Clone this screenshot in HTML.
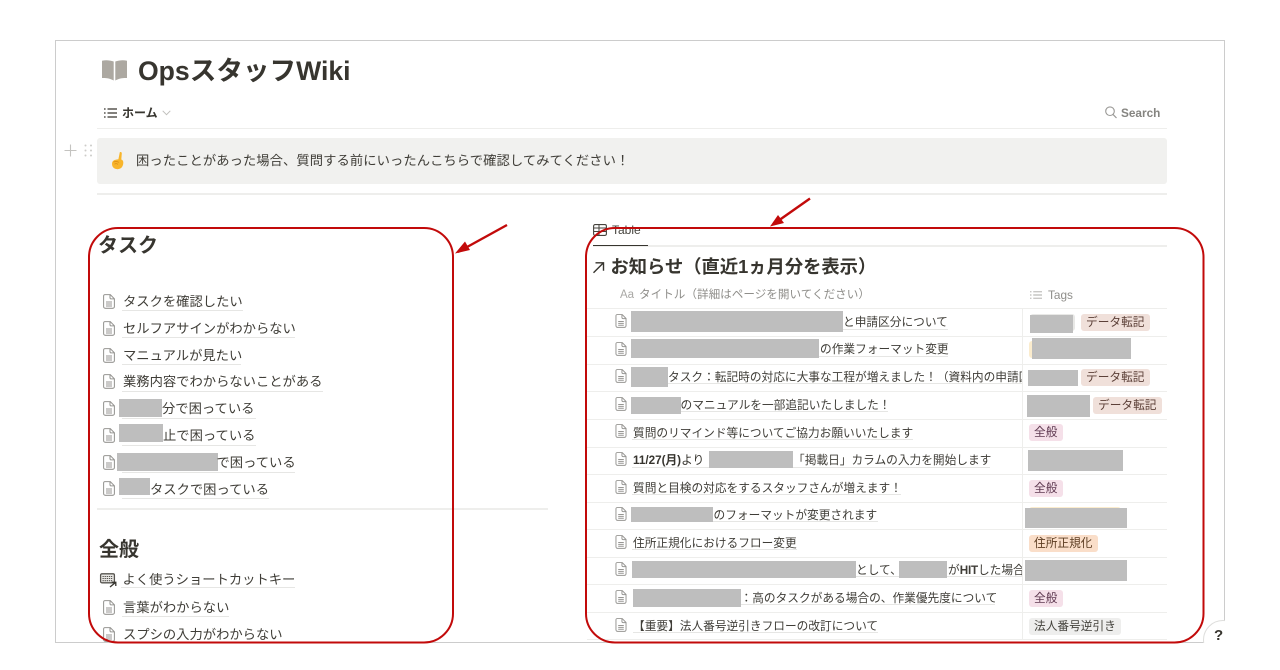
<!DOCTYPE html>
<html lang="ja"><head><meta charset="utf-8"><title>OpsスタッフWiki</title>
<style>
html,body{margin:0;padding:0;background:#fff;width:1280px;height:670px;overflow:hidden}
body{font-family:"Liberation Sans","Noto Sans CJK JP",sans-serif;color:#37352f;position:relative}
#page{position:absolute;left:0;top:0;width:1280px;height:670px;clip-path:inset(39px 55px 27px 55px);filter:blur(.35px)}
#frame{position:absolute;left:55px;top:40px;width:1168px;height:601px;border:1px solid #ccc}
.t{position:absolute;white-space:nowrap;line-height:20px;height:20px}
.l{font-size:13.3px;color:#3f3d37;margin-top:1px}
.c{font-size:11.7px;color:#3f3d37;margin-top:1px}
.h{font-size:20px;font-weight:700;line-height:28px;height:28px;color:#37352f;margin-top:.5px}
.r{position:absolute;background:#bebebe}
.u{position:absolute;height:1.3px;background:#e6e6e4}
.b{position:absolute;background:#eeeeec}
.g{position:absolute;height:1px;background:#eeeeec;left:587px;width:580px}
.tag{position:absolute;height:17px;line-height:17px;border-radius:3px;font-size:11.7px;padding:0 5px;white-space:nowrap;box-sizing:border-box;color:#5c4038}
.dt{background:#f0e0da}.gen{background:#f5e0e9;color:#5e3850}.adr{background:#fadec9;color:#5c3d22}.hou{background:#eeeeed;color:#45433d}
svg.i{position:absolute;overflow:visible}
svg.d{margin-top:-1px}
</style></head><body>
<svg width="0" height="0" style="position:absolute"><defs>
<symbol id="doc" viewBox="0 0 12 15"><path d="M1.9.6H7.3L11.4 4.8V12.6A1.7 1.7 0 0 1 9.7 14.3H2.300A1.7 1.7 0 0 1 .6 12.6V1.900A1.300 1.300 0 0 1 1.900.6ZM7 .8V3.600A1.300 1.300 0 0 0 8.300 4.900H11.200M3 8H9M3 10H9M3 12H9" fill="none" stroke="#979693" stroke-width="1.05"/></symbol>
<symbol id="lst" viewBox="0 0 13 10"><path d="M0 1H1.600M0 5H1.600M0 9H1.600M3.500 1H13M3.500 5H13M3.500 9H13" fill="none" stroke="currentColor" stroke-width="1.200"/></symbol>
</defs></svg>
<div id="page">
<div id="frame"></div>

<svg class="i" style="left:102px;top:60px" width="25" height="21" viewBox="0 0 25 21"><path d="M0 .8C3.500 -.2 8 .2 11.700 1.500V20.500C8 18.300 3.500 17.800 0 18ZM25 .8C21.500 -.2 17 .2 13.300 1.500V20.500C17 18.300 21.500 17.800 25 18Z" fill="#aca8a1"/></svg>
<div class="t" style="left:138px;top:56px;height:30px;line-height:30px;font-size:26.600px;font-weight:700;color:#37352f">OpsスタッフWiki</div>

<svg class="i" style="left:104px;top:108px;color:#37352f" width="13" height="10"><use href="#lst"/></svg>
<div class="t" style="left:122px;top:103px;font-size:12px;font-weight:700">ホーム</div>
<svg class="i" style="left:162px;top:110px" width="9" height="6"><path d="M.7.8 4.500 4.700 8.300.8" fill="none" stroke="#c0bfbc" stroke-width="1"/></svg>
<svg class="i" style="left:1105px;top:106px" width="12" height="13"><circle cx="5" cy="5.200" r="4.300" fill="none" stroke="#9a9996" stroke-width="1.100"/><path d="M8 8.400 11.500 12" stroke="#9a9996" stroke-width="1.200"/></svg>
<div class="t" style="left:1121px;top:102.500px;font-size:11.800px;font-weight:700;color:#858480">Search</div>
<div class="b" style="left:97px;top:128px;width:1070px;height:1px"></div>

<svg class="i" style="left:64px;top:144px" width="13" height="13"><path d="M6.500 .5V12.500M.5 6.500H12.500" stroke="#c4c3c0" stroke-width="1.100"/></svg>
<svg class="i" style="left:84px;top:144px" width="9" height="13"><g fill="#cdccc9"><circle cx="1.500" cy="1.500" r="1"/><circle cx="7" cy="1.500" r="1"/><circle cx="1.500" cy="6.500" r="1"/><circle cx="7" cy="6.500" r="1"/><circle cx="1.500" cy="11.500" r="1"/><circle cx="7" cy="11.500" r="1"/></g></svg>

<div style="position:absolute;left:97px;top:138px;width:1070px;height:46px;background:#f1f1ef;border-radius:3px"></div>
<svg class="i" style="left:110px;top:151px" width="15" height="19" viewBox="0 0 15 19"><path d="M9.800 1.200C10.800 .6 11.900 1.200 11.800 2.400L11.300 8.500C12.700 9 13.400 10 13.300 11.800 13.200 15.500 11.200 18.200 7.500 18.200 4 18.200 2 16 2 12.800 2 10.900 3 9.600 4.600 9 6 8.500 7.500 8.300 8.400 8.200Z" fill="#f8b52b"/><path d="M3.600 11.200C5 10 7.600 10.200 8.800 11.400M4.600 13.200C5.600 12.400 7 12.600 7.800 13.400" fill="none" stroke="#dc8f17" stroke-width=".9"/></svg>
<div class="t" style="left:136px;top:151px;font-size:13.300px;letter-spacing:.07px;color:#3f3d37">困ったことがあった場合、質問する前にいったんこちらで確認してみてください！</div>
<div class="b" style="left:97px;top:193px;width:1070px;height:1.500px"></div>

<div class="t h" style="left:98px;top:231px">タスク</div>

<svg class="i d" style="left:103px;top:295px" width="12" height="15"><use href="#doc"/></svg>
<div class="t l" style="left:123px;top:291px">タスクを確認したい</div><div class="u" style="left:122px;top:309.500px;width:121px"></div>
<svg class="i d" style="left:103px;top:322px" width="12" height="15"><use href="#doc"/></svg>
<div class="t l" style="left:123px;top:317.500px">セルフアサインがわからない</div><div class="u" style="left:122px;top:336.500px;width:173px"></div>
<svg class="i d" style="left:103px;top:349px" width="12" height="15"><use href="#doc"/></svg>
<div class="t l" style="left:123px;top:344.500px">マニュアルが見たい</div><div class="u" style="left:122px;top:363.500px;width:119px"></div>
<svg class="i d" style="left:103px;top:375px" width="12" height="15"><use href="#doc"/></svg>
<div class="t l" style="left:123px;top:371px">業務内容でわからないことがある</div><div class="u" style="left:122px;top:390.500px;width:201px"></div>
<svg class="i d" style="left:103px;top:402px" width="12" height="15"><use href="#doc"/></svg>
<div class="r" style="left:119px;top:399px;width:43px;height:18px"></div>
<div class="t l" style="left:162px;top:398px">分で困っている</div><div class="u" style="left:122px;top:417.500px;width:134px"></div>
<svg class="i d" style="left:103px;top:429px" width="12" height="15"><use href="#doc"/></svg>
<div class="r" style="left:119px;top:424px;width:44px;height:18px"></div>
<div class="t l" style="left:163px;top:425px">止で困っている</div><div class="u" style="left:122px;top:444.500px;width:134px"></div>
<svg class="i d" style="left:103px;top:456px" width="12" height="15"><use href="#doc"/></svg>
<div class="r" style="left:117px;top:453px;width:101px;height:18px"></div>
<div class="t l" style="left:216.500px;top:452px">で困っている</div><div class="u" style="left:122px;top:471.500px;width:173px"></div>
<svg class="i d" style="left:103px;top:482px" width="12" height="15"><use href="#doc"/></svg>
<div class="r" style="left:119px;top:478px;width:31px;height:17px"></div>
<div class="t l" style="left:150px;top:479px">タスクで困っている</div><div class="u" style="left:122px;top:498px;width:147px"></div>

<div class="b" style="left:97px;top:508px;width:451px;height:1.500px"></div>
<div class="t h" style="left:99px;top:535px">全般</div>

<svg class="i" style="left:100px;top:573px" width="17" height="15" viewBox="0 0 17 15"><rect x=".6" y=".8" width="13.800" height="9" rx="1.300" fill="#e8e7e4" stroke="#56544f" stroke-width="1.300"/><path d="M2.500 3.500H12.500M2.500 5.500H12.500M2.500 7.700H12.500" stroke="#56544f" stroke-width="1.100" stroke-dasharray="1.300 .8"/><path d="M10 14 15.500 9.500M11.800 9.300H15.800V13" fill="none" stroke="#37352f" stroke-width="1.300"/></svg>
<div class="t l" style="left:122.500px;top:569px">よく使うショートカットキー</div><div class="u" style="left:121px;top:587px;width:174px"></div>
<svg class="i d" style="left:103px;top:601px" width="12" height="15"><use href="#doc"/></svg>
<div class="t l" style="left:123px;top:597px">言葉がわからない</div><div class="u" style="left:122px;top:616px;width:107px"></div>
<svg class="i d" style="left:103px;top:628px" width="12" height="15"><use href="#doc"/></svg>
<div class="t l" style="left:123px;top:624px">スプシの入力がわからない</div>

<!-- right -->
<svg class="i" style="left:593px;top:224px" width="14" height="12" viewBox="0 0 14 12"><rect x=".6" y=".6" width="12.800" height="10.800" rx="1.500" fill="none" stroke="#45433d" stroke-width="1.100"/><path d="M.6 4H13.400M.6 7.500H13.400M6 .6V11.400" stroke="#45433d" stroke-width="1"/></svg>
<div class="t" style="left:612px;top:220px;font-size:12px;color:#45433d">Table</div>
<div class="b" style="left:593px;top:245px;width:574px;height:1.500px"></div>
<div style="position:absolute;left:593px;top:244.500px;width:55px;height:1.500px;background:#37352f"></div>

<svg class="i" style="left:592px;top:261px" width="13" height="13"><path d="M1.500 11.800 11 2.300M3.500 1.800H11.500V9.800" fill="none" stroke="#37352f" stroke-width="1.400"/></svg>
<div class="t" style="left:610.500px;top:254px;height:26px;line-height:26px;font-size:18.300px;font-weight:700;color:#37352f">お知らせ（直近1ヵ月分を表示）</div>

<div class="t" style="left:620px;top:284.500px;font-size:11.500px;color:#a9a8a5">Aa</div>
<div class="t" style="left:639px;top:285px;font-size:11.600px;color:#8f8e8a">タイトル（詳細はページを開いてください）</div>
<svg class="i" style="left:1030px;top:291px;color:#a9a8a5" width="12" height="8" viewBox="0 0 13 10" preserveAspectRatio="none"><use href="#lst"/></svg>
<div class="t" style="left:1048px;top:285px;font-size:11.800px;color:#8f8e8a">Tags</div>

<div class="g" style="top:308px"></div><div class="g" style="top:336px"></div><div class="g" style="top:363.500px"></div><div class="g" style="top:391px"></div><div class="g" style="top:418.500px"></div><div class="g" style="top:446.500px"></div><div class="g" style="top:474px"></div><div class="g" style="top:501.500px"></div><div class="g" style="top:529px"></div><div class="g" style="top:557px"></div><div class="g" style="top:584px"></div><div class="g" style="top:612px"></div><div class="g" style="top:639px"></div>
<div style="position:absolute;left:1022px;top:308px;width:1px;height:331px;background:#eeeeec"></div>

<!-- row 1 -->
<svg class="i d" style="left:615px;top:315px" width="12" height="14"><use href="#doc"/></svg>
<div class="u" style="left:631px;top:328.500px;width:317px"></div>
<div class="r" style="left:631px;top:311px;width:212px;height:21px"></div>
<div class="t c" style="left:843px;top:312px">と申請区分について</div>
<div class="tag" style="left:1030px;top:314px;width:45px;background:#e8e8e6"></div>
<div class="r" style="left:1030px;top:315px;width:43px;height:18px"></div>
<div class="tag dt" style="left:1081px;top:314px;width:69px">データ転記</div>
<!-- row 2 -->
<svg class="i d" style="left:615px;top:343px" width="12" height="14"><use href="#doc"/></svg>
<div class="u" style="left:631px;top:355.500px;width:317px"></div>
<div class="r" style="left:631px;top:339px;width:188px;height:19px"></div>
<div class="t c" style="left:820px;top:339px">の作業フォーマット変更</div>
<div class="tag" style="left:1029px;top:341px;width:10px;background:#fbeccd"></div>
<div class="r" style="left:1032px;top:338px;width:99px;height:21px"></div>
<!-- row 3 -->
<svg class="i d" style="left:615px;top:370px" width="12" height="14"><use href="#doc"/></svg>
<div class="u" style="left:631px;top:383px;width:391px"></div>
<div style="position:absolute;left:631px;top:360px;width:391px;height:30px;overflow:hidden">
<div class="t c" style="left:37px;top:7px">タスク：転記時の対応に大事な工程が増えました！（資料内の申請区分</div></div>
<div class="r" style="left:631px;top:367px;width:37px;height:20px"></div>
<div class="r" style="left:1028px;top:370px;width:50px;height:16px"></div>
<div class="tag dt" style="left:1081px;top:369px;width:69px">データ転記</div>
<!-- row 4 -->
<svg class="i d" style="left:615px;top:398px" width="12" height="14"><use href="#doc"/></svg>
<div class="u" style="left:631px;top:411px;width:257px"></div>
<div class="r" style="left:631px;top:397px;width:50px;height:17px"></div>
<div class="t c" style="left:680.500px;top:395px">のマニュアルを一部追記いたしました！</div>
<div class="r" style="left:1027px;top:395px;width:63px;height:22px"></div>
<div class="tag dt" style="left:1093px;top:397px;width:69px">データ転記</div>
<!-- row 5 -->
<svg class="i d" style="left:615px;top:425px" width="12" height="14"><use href="#doc"/></svg>
<div class="t c" style="left:633px;top:422.500px">質問のリマインド等についてご協力お願いいたします</div>
<div class="u" style="left:632px;top:438.500px;width:281px"></div>
<div class="tag gen" style="left:1029px;top:424px;width:34px">全般</div>
<!-- row 6 -->
<svg class="i d" style="left:615px;top:453px" width="12" height="14"><use href="#doc"/></svg>
<div class="u" style="left:632px;top:466.500px;width:358px"></div>
<div class="t c" style="left:633px;top:450px;color:#37352f"><b>11/27(月)</b>より</div>
<div class="r" style="left:709px;top:451px;width:84px;height:17px"></div>
<div class="t c" style="left:793px;top:450px">「掲載日」カラムの入力を開始します</div>
<div class="r" style="left:1028px;top:450px;width:95px;height:21px"></div>
<!-- row 7 -->
<svg class="i d" style="left:615px;top:481px" width="12" height="14"><use href="#doc"/></svg>
<div class="t c" style="left:633px;top:478px">質問と目検の対応をするスタッフさんが増えます！</div>
<div class="u" style="left:632px;top:494px;width:269px"></div>
<div class="tag gen" style="left:1029px;top:480px;width:34px">全般</div>
<!-- row 8 -->
<svg class="i d" style="left:615px;top:508px" width="12" height="14"><use href="#doc"/></svg>
<div class="u" style="left:631px;top:521px;width:247px"></div>
<div class="r" style="left:631px;top:507px;width:82px;height:15px"></div>
<div class="t c" style="left:713.500px;top:505px">のフォーマットが変更されます</div>
<div class="tag" style="left:1029px;top:507px;width:92px;background:#fbeccd"></div>
<div class="r" style="left:1025px;top:508px;width:102px;height:20px"></div>
<!-- row 9 -->
<svg class="i d" style="left:615px;top:536px" width="12" height="14"><use href="#doc"/></svg>
<div class="t c" style="left:633px;top:533px">住所正規化におけるフロー変更</div>
<div class="u" style="left:632px;top:549px;width:165px"></div>
<div class="tag adr" style="left:1029px;top:535px;width:69px">住所正規化</div>
<!-- row 10 -->
<svg class="i d" style="left:615px;top:563px" width="12" height="14"><use href="#doc"/></svg>
<div class="u" style="left:632px;top:576px;width:390px"></div>
<div class="r" style="left:632px;top:561px;width:224px;height:17px"></div>
<div class="t c" style="left:856px;top:560px">として、</div>
<div class="r" style="left:899px;top:561px;width:48px;height:17px"></div>
<div style="position:absolute;left:948px;top:555px;width:74px;height:30px;overflow:hidden"><div class="t c" style="left:0;top:5px">が<span style="font-weight:700;letter-spacing:-.2px">HIT</span>した場合</div></div>
<div class="r" style="left:1025px;top:560px;width:102px;height:21px"></div>
<!-- row 11 -->
<svg class="i d" style="left:615px;top:591px" width="12" height="14"><use href="#doc"/></svg>
<div class="u" style="left:633px;top:604px;width:362px"></div>
<div class="r" style="left:633px;top:589px;width:108px;height:18px"></div>
<div class="t c" style="left:740.500px;top:588px">：高のタスクがある場合の、作業優先度について</div>
<div class="tag gen" style="left:1029px;top:590px;width:34px">全般</div>
<!-- row 12 -->
<svg class="i d" style="left:615px;top:619px" width="12" height="14"><use href="#doc"/></svg>
<div class="t c" style="left:633px;top:615.500px">【重要】法人番号逆引きフローの改訂について</div>
<div class="u" style="left:633px;top:632px;width:245px"></div>
<div class="tag hou" style="left:1029px;top:618px;width:92px">法人番号逆引き</div>

<div style="position:absolute;left:1203px;top:620px;width:40px;height:40px;border-radius:50%;background:#fff;border:1px solid #dededc;box-sizing:border-box"></div>
<div class="t" style="left:1214px;top:626px;font-size:15px;font-weight:700;color:#37352f">?</div>
</div>

<svg style="position:absolute;left:0;top:0" width="1280" height="670" fill="none">
<rect x="89" y="228" width="364" height="414.500" rx="29" stroke="#c20a0a" stroke-width="2"/>
<rect x="586" y="228" width="617.500" height="414.500" rx="29" stroke="#c20a0a" stroke-width="2"/>
<path d="M507 225 458 252" stroke="#c20a0a" stroke-width="2.400"/>
<path d="M455 253.500 465 241.500 470 250Z" fill="#c20a0a"/>
<path d="M810 198.500 773 224.500" stroke="#c20a0a" stroke-width="2.400"/>
<path d="M770 226.500 778 215 784 223Z" fill="#c20a0a"/>
</svg>
</body></html>
